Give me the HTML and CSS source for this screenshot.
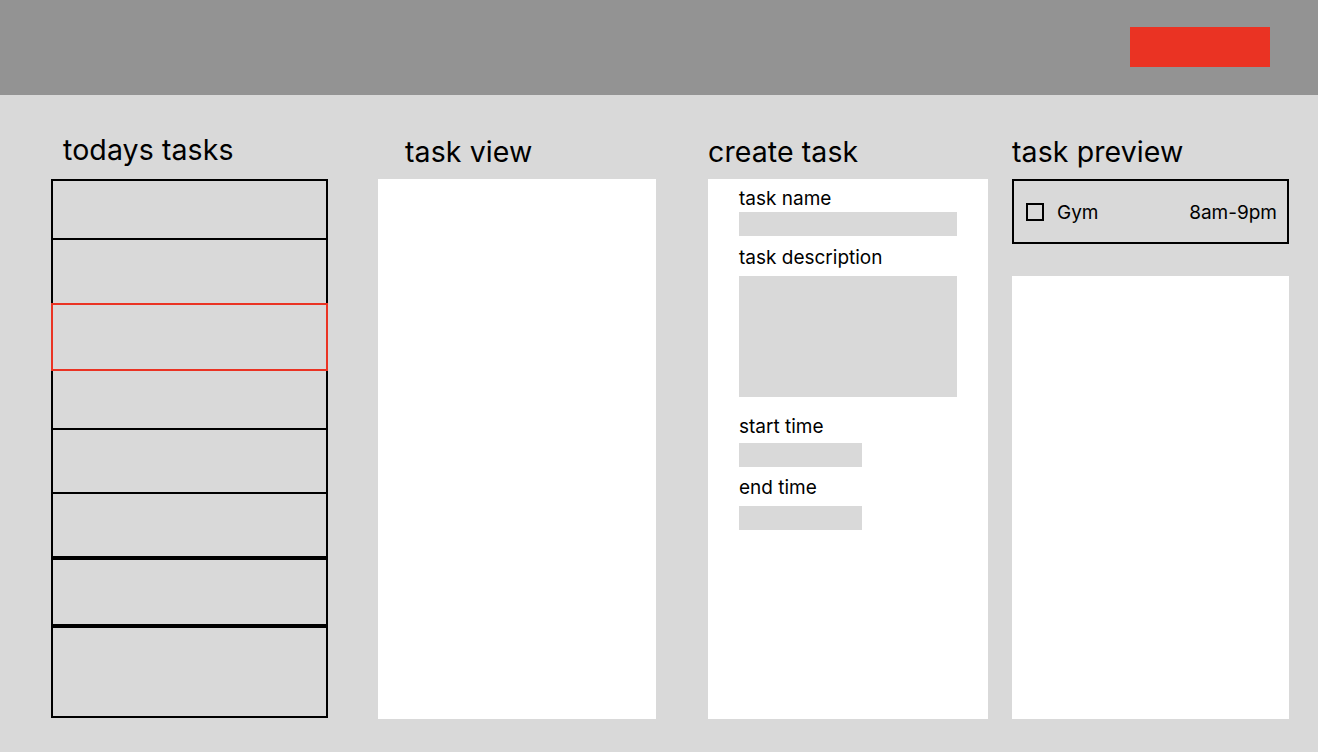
FILE: index.html
```html
<!DOCTYPE html>
<html lang="en">
<head>
<meta charset="utf-8">
<title>Tasks</title>
<link rel="stylesheet" href="styles.css">
</head>
<body>
<header class="topbar">
  <div class="topbar-btn"></div>
</header>
<main class="board">
  <section class="col col-today">
    <h2 class="col-title title-today">todays tasks</h2>
    <div class="task-list">
      <div class="task-row r1"></div>
      <div class="task-row r2"></div>
      <div class="task-row r3 selected"></div>
      <div class="task-row r4"></div>
      <div class="task-row r5"></div>
      <div class="task-row r6"></div>
      <div class="task-row r7"></div>
      <div class="task-row r8"></div>
    </div>
  </section>
  <section class="col col-view">
    <h2 class="col-title title-view">task view</h2>
    <div class="panel panel-full"></div>
  </section>
  <section class="col col-create">
    <h2 class="col-title">create task</h2>
    <div class="panel panel-full create-form">
      <div class="field-label l-name">task name</div>
      <div class="field-input in-name"></div>
      <div class="field-label l-desc">task description</div>
      <div class="field-input in-desc"></div>
      <div class="field-label l-start">start time</div>
      <div class="field-input in-time in-start"></div>
      <div class="field-label l-end">end time</div>
      <div class="field-input in-time in-end"></div>
    </div>
  </section>
  <section class="col col-preview">
    <h2 class="col-title">task preview</h2>
    <div class="preview-card">
      <span class="checkbox"></span>
      <span class="preview-name">Gym</span>
      <span class="preview-time">8am-9pm</span>
    </div>
    <div class="panel panel-preview"></div>
  </section>
</main>
</body>
</html>
```
FILE: styles.css
```css
* { box-sizing: border-box; }
html, body {
  margin: 0;
  padding: 0;
}
body {
  background: #d9d9d9;
  font-family: Inter, "Noto Sans", Arial, sans-serif;
  color: #000;
  width: 1318px;
  height: 752px;
  overflow: hidden;
}
.topbar {
  height: 95px;
  background: #939393;
  display: flex;
  justify-content: flex-end;
  align-items: flex-start;
  padding: 27px 48px 0 0;
}
.topbar-btn {
  width: 140px;
  height: 40px;
  background: #ea3323;
}
.board {
  display: flex;
  align-items: flex-start;
  padding: 40px 0 0 51px;
}
.col { display: flex; flex-direction: column; }
.col-today { width: 277px; }
.col-view { width: 278px; margin-left: 50px; }
.col-create { width: 280px; margin-left: 52px; }
.col-preview { width: 277px; margin-left: 24px; }

.col-title {
  margin: 0 0 10px 0;
  font-size: 28.5px;
  font-weight: 400;
  line-height: 34px;
  height: 34px;
  letter-spacing: 0.1px;
}
.title-today { padding-left: 12px; margin-top: -2px; margin-bottom: 12px; }
.title-view { padding-left: 27px; }

.task-list { display: flex; flex-direction: column; }
.task-row {
  border: 2px solid #000;
  background: #d9d9d9;
  margin-top: -2px;
}
.task-row.r1 { margin-top: 0; height: 61px; }
.task-row.r2 { height: 67px; }
.task-row.r3 { height: 68px; }
.task-row.r4 { height: 61px; }
.task-row.r5 { height: 66px; }
.task-row.r6 { height: 66px; }
.task-row.r7 { margin-top: 0; height: 68px; }
.task-row.r8 { margin-top: 0; height: 92px; }
.task-row.selected { border-color: #ea3323; position: relative; z-index: 1; }

.panel { background: #fff; }
.panel-full { height: 540px; }

.create-form {
  padding: 9px 0 0 31px;
  display: flex;
  flex-direction: column;
  align-items: flex-start;
}
.field-label {
  font-size: 19px;
  line-height: 22px;
  height: 22px;
}
.field-input { background: #d9d9d9; }
.in-name { width: 218px; height: 24px; margin-top: 2px; }
.l-desc { margin-top: 11px; }
.in-desc { width: 218px; height: 121px; margin-top: 7px; }
.l-start { margin-top: 19px; }
.in-time { width: 123px; height: 24px; }
.in-start { margin-top: 5px; }
.l-end { margin-top: 10px; }
.in-end { margin-top: 7px; }

.preview-card {
  height: 65px;
  border: 2px solid #000;
  background: #d9d9d9;
  display: flex;
  align-items: center;
  padding: 1px 10px 0 12px;
  font-size: 19px;
}
.checkbox {
  width: 18px;
  height: 18px;
  border: 2px solid #000;
  flex: none;
}
.preview-name { margin-left: 13px; }
.preview-time { margin-left: auto; }
.panel-preview { margin-top: 32px; height: 443px; }
```
